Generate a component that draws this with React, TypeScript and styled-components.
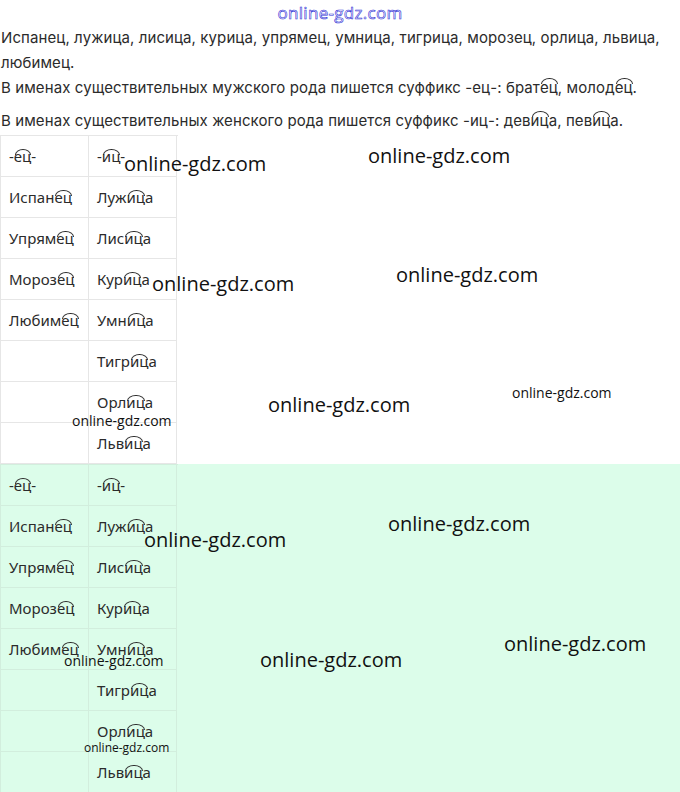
import React from 'react';
import styled, { createGlobalStyle } from 'styled-components';

const GlobalStyle = createGlobalStyle`
  body {
    margin: 0;
    background: #fff;
    font-family: Inter, "Noto Sans", sans-serif;
    color: #2b2b2b;
  }
`;

const Page = styled.div`
  position: relative;
  width: 680px;
  min-height: 792px;
  overflow: hidden;
`;

const SiteTitle = styled.div`
  height: 25px;
  display: flex;
  justify-content: center;
  align-items: center;
  font-family: "Open Sans", sans-serif;
  font-size: 17px;
  color: #fff;
  -webkit-text-stroke: 0.6px #2f2fd6;
  letter-spacing: 0.3px;
`;

const Paragraph = styled.p<{ $gap?: number }>`
  margin: 0 0 ${(p) => p.$gap ?? 0}px 0;
  font-size: 15px;
  line-height: 25px;
  letter-spacing: 0.1px;
  padding-left: 1px;
`;

const Section = styled.div<{ $tint?: boolean }>`
  background: ${(p) => (p.$tint ? '#dcfdea' : 'transparent')};
  margin-top: ${(p) => (p.$tint ? 0 : 2)}px;
`;

const Table = styled.div<{ $tint?: boolean }>`
  display: grid;
  grid-template-columns: 88px 88px;
  width: 177px;
  border-left: 1px solid ${(p) => (p.$tint ? '#d2eedd' : '#e6e6e6')};
  border-top: 1px solid ${(p) => (p.$tint ? '#d2eedd' : '#e6e6e6')};
`;

const Cell = styled.div<{ $tint?: boolean }>`
  height: 40px;
  display: flex;
  align-items: center;
  padding-left: 8px;
  border-right: 1px solid ${(p) => (p.$tint ? '#d2eedd' : '#e6e6e6')};
  border-bottom: 1px solid ${(p) => (p.$tint ? '#d2eedd' : '#e6e6e6')};
  font-family: "Noto Sans", sans-serif;
  font-size: 15px;
  color: #2b2b2b;
`;

const Arc = styled.span`
  position: relative;
  display: inline-block;

  &::before {
    content: '';
    position: absolute;
    left: 1px;
    right: 0;
    top: 3px;
    height: 5px;
    border: 1px solid currentColor;
    border-bottom: none;
    border-radius: 50% 50% 0 0 / 100% 100% 0 0;
  }
`;

const Mark = styled.div<{ $x: number; $y: number; $size: number }>`
  position: absolute;
  left: ${(p) => p.$x}px;
  top: ${(p) => p.$y}px;
  font-family: "Open Sans", sans-serif;
  font-size: ${(p) => p.$size}px;
  line-height: 1;
  color: #111;
  white-space: nowrap;
  pointer-events: none;
`;

// word, suffix, ending
const rows: [string, string, string][][] = [
  [['-', 'ец', '-'], ['-', 'иц', '-']],
  [['Испан', 'ец', ''], ['Луж', 'иц', 'а']],
  [['Упрям', 'ец', ''], ['Лис', 'иц', 'а']],
  [['Мороз', 'ец', ''], ['Кур', 'иц', 'а']],
  [['Любим', 'ец', ''], ['Умн', 'иц', 'а']],
  [['', '', ''], ['Тигр', 'иц', 'а']],
  [['', '', ''], ['Орл', 'иц', 'а']],
  [['', '', ''], ['Льв', 'иц', 'а']],
];

const marks: [number, number, number][] = [
  [124, 154, 20],
  [368, 146, 20],
  [152, 274, 20],
  [396, 265, 20],
  [268, 395, 20],
  [512, 386, 14],
  [72, 414, 14],
  [144, 530, 20],
  [388, 514, 20],
  [504, 634, 20],
  [260, 650, 20],
  [64, 654, 14],
  [84, 742, 12],
];

function Word({ parts }: { parts: [string, string, string] }) {
  const [root, suffix, end] = parts;
  return (
    <span>
      {root}
      {suffix && <Arc>{suffix}</Arc>}
      {end}
    </span>
  );
}

function SuffixTable({ tint }: { tint?: boolean }) {
  return (
    <Table $tint={tint}>
      {rows.map(([a, b], i) => (
        <React.Fragment key={i}>
          <Cell $tint={tint}><Word parts={a} /></Cell>
          <Cell $tint={tint}><Word parts={b} /></Cell>
        </React.Fragment>
      ))}
    </Table>
  );
}

export default function App() {
  return (
    <Page>
      <GlobalStyle />
      <SiteTitle>online-gdz.com</SiteTitle>
      <Paragraph>
        Испанец, лужица, лисица, курица, упрямец, умница, тигрица, морозец, орлица, львица,
        любимец.
      </Paragraph>
      <Paragraph $gap={8}>
        В именах существительных мужского рода пишется суффикс -ец-: брат<Arc>ец</Arc>, молод
        <Arc>ец</Arc>.
      </Paragraph>
      <Paragraph>
        В именах существительных женского рода пишется суффикс -иц-: дев<Arc>иц</Arc>а, пев
        <Arc>иц</Arc>а.
      </Paragraph>
      <Section>
        <SuffixTable />
      </Section>
      <Section $tint>
        <SuffixTable tint />
      </Section>
      {marks.map(([x, y, s], i) => (
        <Mark key={i} $x={x} $y={y} $size={s}>
          online-gdz.com
        </Mark>
      ))}
    </Page>
  );
}
